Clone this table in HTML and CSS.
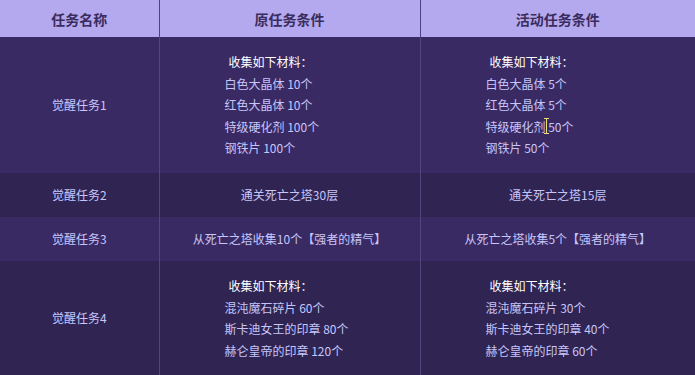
FILE: index.html
```html
<!DOCTYPE html>
<html lang="zh">
<head>
<meta charset="utf-8">
<link rel="stylesheet" href="styles.css">
</head>
<body>
<table class="tasks">
  <colgroup>
    <col class="c1"><col class="c2"><col class="c3">
  </colgroup>
  <thead>
    <tr>
      <th>任务名称</th>
      <th class="div">原任务条件</th>
      <th class="div">活动任务条件</th>
    </tr>
  </thead>
  <tbody>
    <tr class="light">
      <td class="name">觉醒任务1</td>
      <td class="div list">
        <div class="title">收集如下材料：</div>
        <div>白色大晶体 10个</div>
        <div>红色大晶体 10个</div>
        <div>特级硬化剂 100个</div>
        <div>钢铁片 100个</div>
      </td>
      <td class="div list">
        <div class="title">收集如下材料：</div>
        <div>白色大晶体 5个</div>
        <div>红色大晶体 5个</div>
        <div class="cur">特级硬化剂 50个<span class="ibeam"></span></div>
        <div>钢铁片 50个</div>
      </td>
    </tr>
    <tr class="dark">
      <td class="name single">觉醒任务2</td>
      <td class="div single center">通关死亡之塔30层</td>
      <td class="div single center">通关死亡之塔15层</td>
    </tr>
    <tr class="light">
      <td class="name single">觉醒任务3</td>
      <td class="div single center">从死亡之塔收集10个【强者的精气】</td>
      <td class="div single center">从死亡之塔收集5个【强者的精气】</td>
    </tr>
    <tr class="dark">
      <td class="name">觉醒任务4</td>
      <td class="div list">
        <div class="title">收集如下材料：</div>
        <div>混沌魔石碎片 60个</div>
        <div>斯卡迪女王的印章 80个</div>
        <div>赫仑皇帝的印章 120个</div>
      </td>
      <td class="div list">
        <div class="title">收集如下材料：</div>
        <div>混沌魔石碎片 30个</div>
        <div>斯卡迪女王的印章 40个</div>
        <div>赫仑皇帝的印章 60个</div>
      </td>
    </tr>
  </tbody>
</table>
</body>
</html>
```

FILE: styles.css
```css
html, body {
  margin: 0;
  padding: 0;
  background: #2f2452;
}
body {
  font-family: "Noto Sans CJK SC", "Microsoft YaHei", sans-serif;
  overflow: hidden;
}
.tasks {
  width: 695px;
  border-collapse: collapse;
  table-layout: fixed;
}
.c1 { width: 159px; }
.c2 { width: 261px; }
.c3 { width: 275px; }

.tasks th {
  height: 37px;
  padding: 0;
  background: #b4a9ee;
  color: #3a2c5e;
  font-size: 14px;
  font-weight: bold;
  text-align: center;
  vertical-align: middle;
}
.tasks th.div { border-left: 1px solid #4e4084; }

.tasks td {
  padding: 0;
  font-size: 12px;
  color: #c6c6fb;
  line-height: 21.6px;
  vertical-align: middle;
}
.tasks td.div { border-left: 1px solid #54457f; }
.light td { background: #3a2a63; }
.dark td { background: #2f2452; }

.name { text-align: center; }
.center { text-align: center; }
.single { height: 44px; padding: 0; }
.list {
  padding: 14px 0 14px 65px !important;
  text-align: left;
}
.title {
  color: #ffffff;
  padding-left: 4px;
}
.cur { position: relative; }
.ibeam {
  position: absolute;
  left: 58px;
  top: 2px;
  width: 5px;
  height: 16px;
  border-top: 1px solid #e9e27c;
  border-bottom: 1px solid #e9e27c;
  box-sizing: border-box;
}
.ibeam::after {
  content: "";
  position: absolute;
  left: 2px;
  top: 0;
  width: 1px;
  height: 14px;
  background: #e9e27c;
}
```
